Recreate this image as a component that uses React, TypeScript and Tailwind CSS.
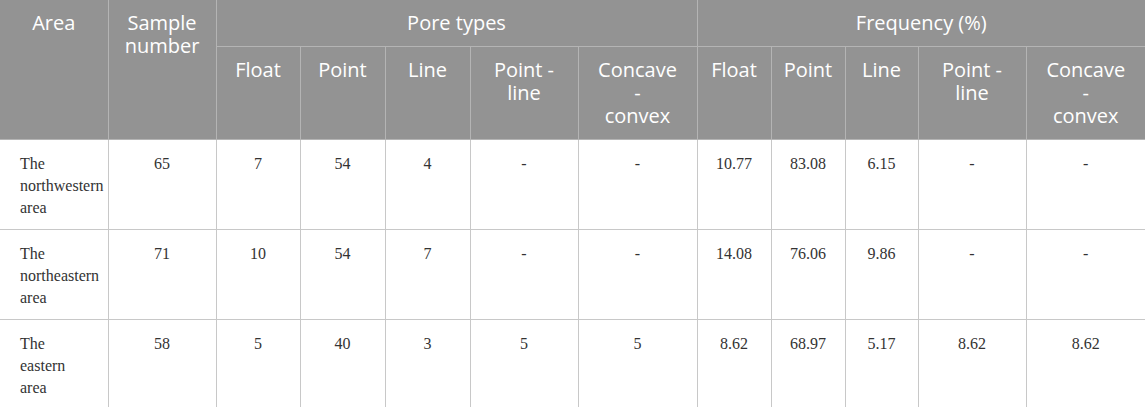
const widths = [108, 108, 84, 85, 85, 108, 119, 74, 74, 73, 108, 119];

const subHeads = [
  ["Float"],
  ["Point"],
  ["Line"],
  ["Point -", "line"],
  ["Concave", "-", "convex"],
  ["Float"],
  ["Point"],
  ["Line"],
  ["Point -", "line"],
  ["Concave", "-", "convex"],
];

const rows = [
  {
    area: ["The", "northwestern", "area"],
    values: ["65", "7", "54", "4", "-", "-", "10.77", "83.08", "6.15", "-", "-"],
  },
  {
    area: ["The", "northeastern", "area"],
    values: ["71", "10", "54", "7", "-", "-", "14.08", "76.06", "9.86", "-", "-"],
  },
  {
    area: ["The", "eastern", "area"],
    values: ["58", "5", "40", "3", "5", "5", "8.62", "68.97", "5.17", "8.62", "8.62"],
  },
];

const th =
  "border border-[#b4b4b4] px-1 pt-[11px] pb-[12px] align-top text-center font-normal";

const App = () => {
  return (
    <div className="w-[1145px] h-[407px] bg-white overflow-hidden">
      <table className="w-[1145px] table-fixed border-collapse border-hidden">
        <colgroup>
          {widths.map((w, i) => (
            <col key={i} style={{ width: w }} />
          ))}
        </colgroup>
        <thead
          className="bg-[#939393] text-white text-[20px] leading-[23px]"
          style={{ fontFamily: "'Open Sans', 'Noto Sans', sans-serif" }}
        >
          <tr className="h-[46px]">
            <th rowSpan={2} className={th}>
              <div>Area</div>
            </th>
            <th rowSpan={2} className={th}>
              <div>Sample</div>
              <div>number</div>
            </th>
            <th colSpan={5} className={th}>
              Pore types
            </th>
            <th colSpan={5} className={th}>
              Frequency (%)
            </th>
          </tr>
          <tr className="h-[91px]">
            {subHeads.map((lines, i) => (
              <th key={i} className={th}>
                {lines.map((l, j) => (
                  <div key={j}>{l}</div>
                ))}
              </th>
            ))}
          </tr>
        </thead>
        <tbody
          className="text-[#333333] text-[16px] leading-[22px]"
          style={{ fontFamily: "'Liberation Serif', 'DejaVu Serif', serif" }}
        >
          {rows.map((row, i) => (
            <tr key={i} className="h-[90px]">
              <td className="border border-[#c8c8c8] pl-[20px] pr-1 pt-[13px] align-top">
                {row.area.map((l, j) => (
                  <div key={j}>{l}</div>
                ))}
              </td>
              {row.values.map((v, j) => (
                <td
                  key={j}
                  className="border border-[#c8c8c8] px-1 pt-[13px] align-top text-center"
                >
                  {v}
                </td>
              ))}
            </tr>
          ))}
        </tbody>
      </table>
    </div>
  );
};

export default App;
